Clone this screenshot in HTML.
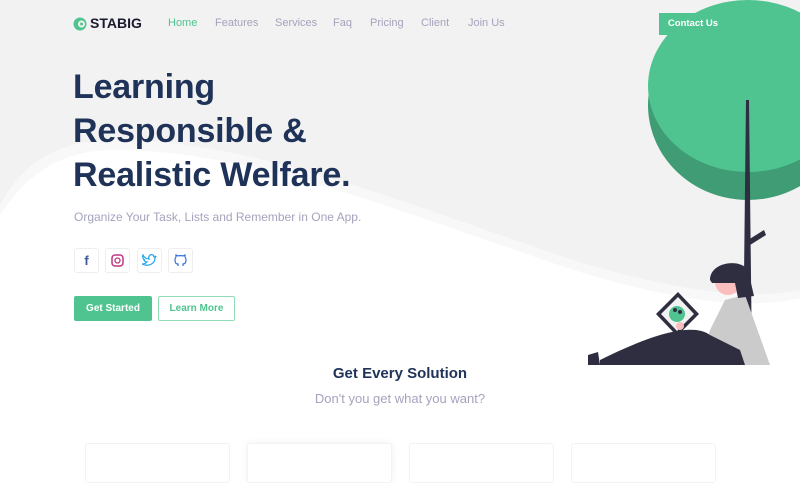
<!DOCTYPE html>
<html><head><meta charset="utf-8"><style>
*{margin:0;padding:0;box-sizing:border-box}
body{width:800px;height:470px;overflow:hidden;background:#fff;font-family:"Liberation Sans",sans-serif;position:relative}
.abs{position:absolute}
.nav a{position:absolute;top:17px;font-size:11px;color:#a4a3bd;text-decoration:none}
h1{position:absolute;left:73px;top:65px;font-size:34px;line-height:44px;color:#1f3258;font-weight:bold;letter-spacing:-0.2px}
.soc{position:absolute;top:248px;width:25px;height:25px;border:1px solid #eee;border-radius:3px;background:#fff;display:flex;align-items:center;justify-content:center}
.card{position:absolute;top:443px;width:145px;height:40px;background:#fff;border:1px solid #f3f3f3;border-radius:3px}
</style></head><body>
<svg class="abs" style="left:0;top:0" width="800" height="470">
<rect width="800" height="470" fill="#f2f2f2"/>
<path d="M0,205 C25,160 60,140 115,140 C260,140 420,210 580,262 C680,292 750,300 800,290 L800,470 L0,470Z" fill="#f8f8f8"/>
<path d="M0,215 C30,170 65,150 115,150 C260,150 420,220 580,272 C680,302 750,310 800,298 L800,470 L0,470Z" fill="#fff"/>
<ellipse cx="748" cy="105" rx="100" ry="95" fill="#3f9c74"/>
<ellipse cx="748" cy="86" rx="100" ry="86" fill="#4fc490"/>
<path d="M746,100 L749,100 L752,365 L743,365Z" fill="#2f2e41"/>
<path d="M748,240 L764,230 L766,235 L750,245Z" fill="#2f2e41"/>
<path d="M725,300 L745,295 L770,365 L700,365 L710,330Z" fill="#cbcbcb"/>
<path d="M690,340 L715,362 L708,365 L684,345Z" fill="#cbcbcb"/>
<path d="M600,360 C640,340 690,320 710,335 L740,350 L745,365 L600,365Z" fill="#2f2e41"/>
<path d="M588,355 L598,352 L600,365 L588,365Z" fill="#2f2e41"/>
<circle cx="728" cy="282" r="13" fill="#fbbebe"/>
<path d="M710,280 C710,262 740,258 748,270 L754,296 L738,298 L735,283 L712,283Z" fill="#2f2e41"/>
<path d="M678,292 L699,314 L677,336 L656,314Z" fill="#2f2e41"/>
<path d="M678,297 L694,314 L677,331 L661,314Z" fill="#f2f2f2"/>
<circle cx="677" cy="314" r="8" fill="#4fc490"/>
<circle cx="675" cy="310" r="2" fill="#2f2e41"/><circle cx="680" cy="312" r="2" fill="#2f2e41"/>
<circle cx="680" cy="326" r="4" fill="#fbbebe"/>
<rect x="0" y="365" width="800" height="105" fill="#fff"/>
</svg>
<svg class="abs" style="left:73px;top:17px" width="14" height="14" viewBox="0 0 14 14"><circle cx="7" cy="7" r="6.5" fill="#4fc490"/><circle cx="8.5" cy="7" r="3.5" fill="#f2f2f2"/><circle cx="8.5" cy="7" r="1.5" fill="#4fc490"/></svg>
<div class="abs" style="left:90px;top:15px;font-size:14px;font-weight:bold;color:#1a1a2e">STABIG</div>
<div class="nav">
<a style="left:168px;color:#4fc490">Home</a><a style="left:215px">Features</a><a style="left:275px">Services</a><a style="left:333px">Faq</a><a style="left:370px">Pricing</a><a style="left:421px">Client</a><a style="left:468px">Join Us</a>
</div>
<div class="abs" style="left:659px;top:13px;width:68px;height:22px;background:#4fc490;color:#fff;font-size:9.5px;font-weight:bold;line-height:22px;text-align:center">Contact Us</div>
<h1>Learning<br>Responsible &amp;<br>Realistic Welfare.</h1>
<div class="abs" style="left:74px;top:210px;font-size:12px;color:#a4a3bd">Organize Your Task, Lists and Remember in One App.</div>
<div class="soc" style="left:74px"><span style="color:#3b5998;font-weight:bold;font-size:13px">f</span></div>
<div class="soc" style="left:105px"><svg width="13" height="13"><rect x="1" y="1" width="11" height="11" rx="3" fill="none" stroke="#c13584" stroke-width="1.5"/><circle cx="6.5" cy="6.5" r="2.5" fill="none" stroke="#c13584" stroke-width="1.3"/></svg></div>
<div class="soc" style="left:137px"><svg width="15" height="13" viewBox="0 0 15 13"><path d="M14,2 C13,3 12,3 12,3 C12,1 10,0 8,1 C7,2 6,4 7,5 C4,5 2,3 1,1 C0,4 2,6 3,6 L2,6 C3,8 4,8 5,8 C4,9 2,10 0,10 C6,13 13,10 13,4 Z" fill="none" stroke="#1da1f2" stroke-width="1.2"/></svg></div>
<div class="soc" style="left:168px"><svg width="13" height="13" viewBox="0 0 13 13"><path d="M4,12 L4,10 C2,10 1,9 1,6 C1,4 2,3 2,3 L2,1 L4,2 C5,1.5 8,1.5 9,2 L11,1 L11,3 C11,3 12,4 12,6 C12,9 11,10 9,10 L9,12" fill="none" stroke="#2f6fe0" stroke-width="1.2"/></svg></div>
<div class="abs" style="left:74px;top:296px;width:78px;height:25px;background:#4fc490;border-radius:2px;color:#fff;font-size:10px;font-weight:bold;line-height:25px;text-align:center">Get Started</div>
<div class="abs" style="left:158px;top:296px;width:77px;height:25px;border:1px solid #8fdcb7;border-radius:2px;color:#4fc490;font-size:10px;font-weight:bold;line-height:23px;text-align:center;background:#fff">Learn More</div>
<div class="abs" style="left:0;width:800px;top:365px;text-align:center;font-size:15px;font-weight:bold;color:#1f3258">Get Every Solution</div>
<div class="abs" style="left:0;width:800px;top:391px;text-align:center;font-size:13px;color:#a4a3bd">Don't you get what you want?</div>
<div class="card" style="left:85px"></div>
<div class="card" style="left:247px;box-shadow:0 0 8px rgba(0,0,0,0.06)"></div>
<div class="card" style="left:409px"></div>
<div class="card" style="left:571px"></div>
</body></html>
